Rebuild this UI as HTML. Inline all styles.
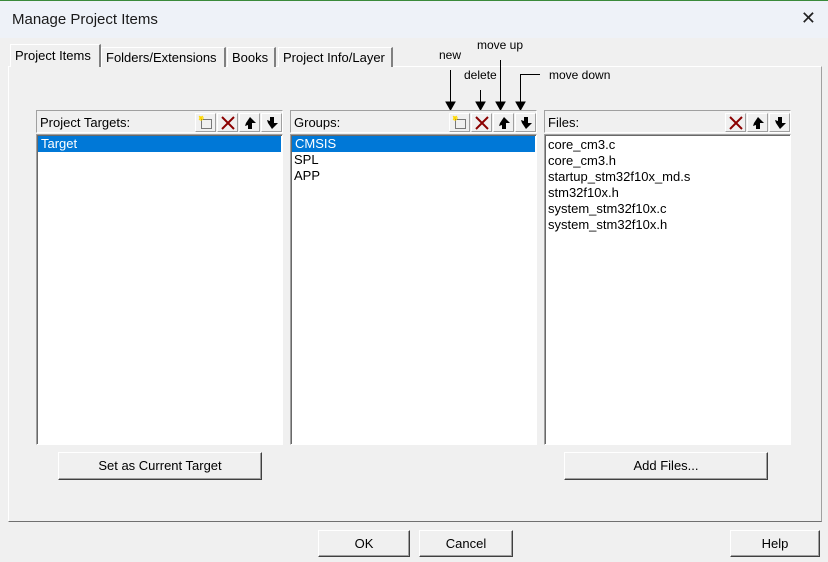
<!DOCTYPE html>
<html><head><meta charset="utf-8"><style>
*{box-sizing:border-box;margin:0;padding:0}
body{width:828px;height:562px;background:#f0f0f0;font-family:"Liberation Sans",sans-serif;font-size:13px;color:#000;position:relative;overflow:hidden}
.abs{position:absolute}
.title{left:0;top:0;width:828px;height:38px;background:#eef2f8;border-top:1px solid #3a8a3a}
.title .t{position:absolute;left:12px;top:10px;font-size:15px;color:#1a1a1a}
.close{position:absolute;left:auto;right:12px;top:7px;font-size:18px;color:#222}
.panel{left:8px;top:66px;width:814px;height:456px;border:1px solid #fff;border-right-color:#a0a0a0;border-bottom-color:#707070}
.tab{top:47px;height:20px;border:1px solid #fff;border-right:2px solid #808080;border-bottom:none;padding:2px 4px;font-size:13px;background:#f0f0f0}
.tab.sel{top:44px;height:23px;z-index:2;padding-top:3px}
.hdr{height:23px;border:1px solid #a0a0a0;border-right-color:#fff;border-bottom-color:#fff;background:#f0f0f0}
.hdr span{position:absolute;left:3px;top:4px;color:#000}
.list{background:#fff;border:1px solid #a0a0a0;border-right-color:#fff;border-bottom-color:#fff;box-shadow:inset 1px 1px 0 #696969}
.list div{height:16px;line-height:16px;padding-left:3px}
.list .s{background:#0078d7;color:#fff;margin:1px 1px 0 1px}
.ib{top:2px;width:21px;height:19px;border:1px solid #fff;border-right-color:#a0a0a0;border-bottom-color:#a0a0a0;background:#f0f0f0}
.ib svg{position:absolute;left:2px;top:1px}
.btn{border:1px solid #fff;border-right-color:#404040;border-bottom-color:#404040;box-shadow:inset -1px -1px 0 #a0a0a0;background:#f0f0f0;text-align:center;line-height:25px;font-size:13px}
.lbl{font-size:12px;color:#000}
</style></head><body>
<div class="abs title"><span class="t">Manage Project Items</span><span class="close">✕</span></div>
<div class="abs panel"></div>
<div class="abs tab sel" style="left:10px;width:91px">Project Items</div>
<div class="abs tab" style="left:101px;width:125px">Folders/Extensions</div>
<div class="abs tab" style="left:227px;width:49px">Books</div>
<div class="abs tab" style="left:278px;width:115px">Project Info/Layer</div>

<div class="abs lbl" style="left:439px;top:48px">new</div>
<div class="abs lbl" style="left:477px;top:38px">move up</div>
<div class="abs lbl" style="left:464px;top:68px">delete</div>
<div class="abs lbl" style="left:549px;top:68px">move down</div>
<svg class="abs" style="left:0;top:0" width="828" height="562">
<g stroke="#000" stroke-width="1" fill="#000">
<line x1="450.5" y1="70" x2="450.5" y2="104"/><polygon points="446,102 455,102 450.5,110"/>
<line x1="480.5" y1="90" x2="480.5" y2="104"/><polygon points="476,102 485,102 480.5,110"/>
<line x1="500.5" y1="60" x2="500.5" y2="104"/><polygon points="496,102 505,102 500.5,110"/>
<polyline points="540,74.5 520.5,74.5 520.5,104" fill="none"/><polygon points="516,102 525,102 520.5,110"/>
</g></svg>

<div class="abs hdr" style="left:36px;top:110px;width:247px"><span>Project Targets:</span>
 <div class="abs ib" style="left:158px"><svg width="16" height="16"><rect x="3.5" y="4.5" width="10" height="9" fill="none" stroke="#000" stroke-dasharray="1 1"/><path d="M3 1v5M1 3h5M1 1l4 4M5 1l-4 4" stroke="#ffd800"/></svg></div>
 <div class="abs ib" style="left:180px"><svg width="16" height="16"><path d="M2 2l12 12M14 2l-12 12" stroke="#8b0000" stroke-width="2"/></svg></div>
 <div class="abs ib" style="left:202px"><svg width="16" height="16"><path d="M8 2l6 6h-4v6h-4v-4l-3 1 1-3z" fill="#000"/></svg></div>
 <div class="abs ib" style="left:224px"><svg width="16" height="16"><path d="M8 14l6-6h-4v-6h-4v4l-3-1 1 3z" fill="#000"/></svg></div>
</div>
<div class="abs list" style="left:36px;top:134px;width:247px;height:311px"><div class="s">Target</div></div>

<div class="abs hdr" style="left:290px;top:110px;width:247px"><span>Groups:</span>
 <div class="abs ib" style="left:158px"><svg width="16" height="16"><rect x="3.5" y="4.5" width="10" height="9" fill="none" stroke="#000" stroke-dasharray="1 1"/><path d="M3 1v5M1 3h5M1 1l4 4M5 1l-4 4" stroke="#ffd800"/></svg></div>
 <div class="abs ib" style="left:180px"><svg width="16" height="16"><path d="M2 2l12 12M14 2l-12 12" stroke="#8b0000" stroke-width="2"/></svg></div>
 <div class="abs ib" style="left:202px"><svg width="16" height="16"><path d="M8 2l6 6h-4v6h-4v-4l-3 1 1-3z" fill="#000"/></svg></div>
 <div class="abs ib" style="left:224px"><svg width="16" height="16"><path d="M8 14l6-6h-4v-6h-4v4l-3-1 1 3z" fill="#000"/></svg></div>
</div>
<div class="abs list" style="left:290px;top:134px;width:247px;height:311px"><div class="s">CMSIS</div><div>SPL</div><div>APP</div></div>

<div class="abs hdr" style="left:544px;top:110px;width:247px"><span>Files:</span>
 <div class="abs ib" style="left:180px"><svg width="16" height="16"><path d="M2 2l12 12M14 2l-12 12" stroke="#8b0000" stroke-width="2"/></svg></div>
 <div class="abs ib" style="left:202px"><svg width="16" height="16"><path d="M8 2l6 6h-4v6h-4v-4l-3 1 1-3z" fill="#000"/></svg></div>
 <div class="abs ib" style="left:224px"><svg width="16" height="16"><path d="M8 14l6-6h-4v-6h-4v4l-3-1 1 3z" fill="#000"/></svg></div>
</div>
<div class="abs list" style="left:544px;top:134px;width:247px;height:311px;padding-top:2px"><div>core_cm3.c</div><div>core_cm3.h</div><div>startup_stm32f10x_md.s</div><div>stm32f10x.h</div><div>system_stm32f10x.c</div><div>system_stm32f10x.h</div></div>

<div class="abs btn" style="left:58px;top:452px;width:204px;height:28px">Set as Current Target</div>
<div class="abs btn" style="left:564px;top:452px;width:204px;height:28px">Add Files...</div>
<div class="abs btn" style="left:318px;top:530px;width:92px;height:27px">OK</div>
<div class="abs btn" style="left:419px;top:530px;width:94px;height:27px">Cancel</div>
<div class="abs btn" style="left:730px;top:530px;width:90px;height:27px">Help</div>
</body></html>
